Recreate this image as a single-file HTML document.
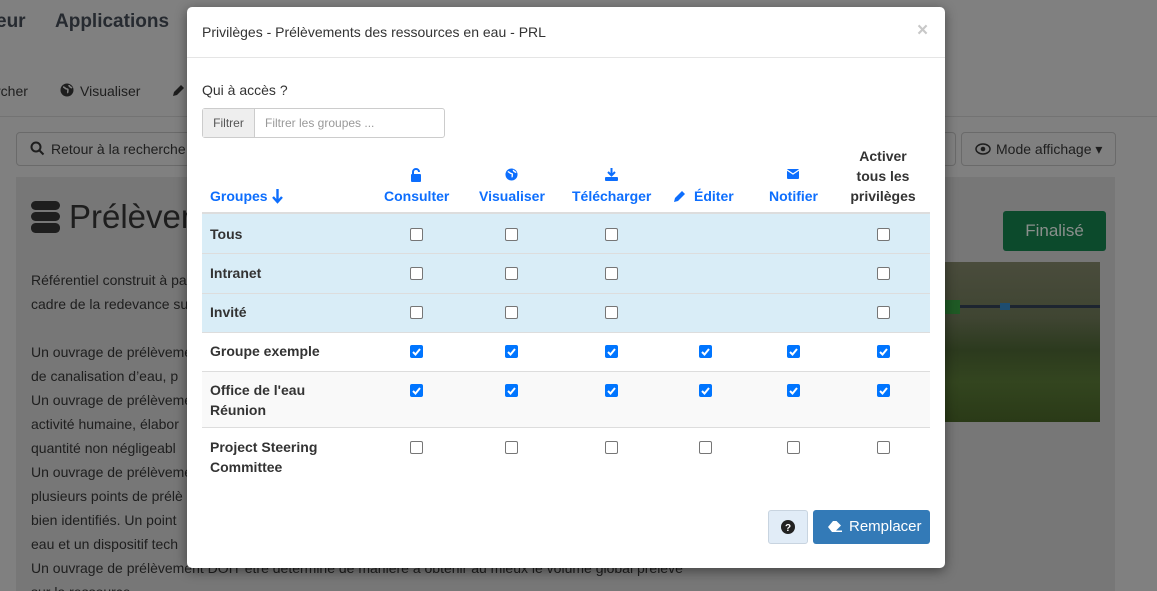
<!DOCTYPE html>
<html><head><meta charset="utf-8"><style>
*{box-sizing:border-box;margin:0;padding:0}
html,body{width:1157px;height:591px;overflow:hidden}
body{background:#808080;font-family:"Liberation Sans",Arial,sans-serif;position:relative;color:#222}
.a{position:absolute;white-space:nowrap}
.bg{color:#1e1e1e}
.modal{position:absolute;left:187px;top:7px;width:758px;height:561px;background:#fff;border-radius:5px;box-shadow:0 3px 12px rgba(0,0,0,.45)}
.cb{position:absolute;width:13px;height:13px;border:1px solid #767676;border-radius:2px;background:#fff}
.ck{position:absolute;width:13px;height:13px;border-radius:2px;background:#0075ff}
.ck svg{position:absolute;left:1px;top:1px}
.hd{position:absolute;color:#0d6efd;font-weight:bold;font-size:14px;text-align:center}
.g{position:absolute;left:23px;font-weight:bold;font-size:14px;color:#333;line-height:20px}
</style></head><body>
<div class="a bg" style="left:-4px;top:11px;font-size:19px;font-weight:bold;color:#262a30">eur</div>
<div class="a bg" style="left:55px;top:11px;font-size:19px;font-weight:bold;color:#262a30">Applications</div>
<div class="a bg" style="left:-4px;top:83px;font-size:14px">rcher</div>
<svg class="a" style="left:60px;top:83px" width="14" height="14" viewBox="0 0 14 14"><circle cx="7" cy="7" r="6.5" fill="#1e1e1e"/><path d="M3 4c2 0 2 2 4 2s0 3 1 4M9 2c0 2 2 2 3 3" stroke="#808080" stroke-width="1.6" fill="none"/></svg>
<div class="a bg" style="left:80px;top:83px;font-size:14px">Visualiser</div>
<svg class="a" style="left:172px;top:83px" width="14" height="14" viewBox="0 0 14 14"><path d="M1 13l1-4 7-7 3 3-7 7z" fill="#1e1e1e"/></svg>
<div class="a" style="left:0;top:116px;width:1157px;height:1px;background:#737373"></div>
<div class="a" style="left:16px;top:132px;width:180px;height:34px;border:1px solid #6a6a6a;border-radius:4px"></div>
<svg class="a" style="left:30px;top:141px" width="15" height="15" viewBox="0 0 15 15"><circle cx="6" cy="6" r="4.5" stroke="#1e1e1e" stroke-width="2" fill="none"/><path d="M9.5 9.5l4 4" stroke="#1e1e1e" stroke-width="2"/></svg>
<div class="a bg" style="left:51px;top:141px;font-size:14px">Retour à la recherche</div>
<div class="a" style="left:945px;top:132px;width:11px;height:34px;border:1px solid #6a6a6a;border-left:none;border-radius:0 4px 4px 0"></div>
<div class="a" style="left:961px;top:132px;width:155px;height:34px;border:1px solid #6a6a6a;border-radius:4px"></div>
<svg class="a" style="left:975px;top:142px" width="16" height="14" viewBox="0 0 16 14"><ellipse cx="8" cy="7" rx="7" ry="5" stroke="#1e1e1e" stroke-width="1.5" fill="none"/><circle cx="8" cy="7" r="2.3" fill="#1e1e1e"/></svg>
<div class="a bg" style="left:996px;top:141px;font-size:14px">Mode affichage ▾</div>
<div class="a" style="left:16px;top:177px;width:1099px;height:414px;background:#777"></div>
<svg class="a" style="left:31px;top:201px" width="29" height="32" viewBox="0 0 29 32"><rect x="0" y="0" width="29" height="9" rx="4.5" fill="#1e1e1e"/><rect x="0" y="11" width="29" height="9" rx="4.5" fill="#1e1e1e"/><rect x="0" y="22" width="29" height="10" rx="4.5" fill="#1e1e1e"/></svg>
<div class="a bg" style="left:69px;top:198px;font-size:33px">Prélèvements</div>
<div class="a bg" style="left:31px;top:268px;font-size:14px;line-height:24px">Référentiel construit à partir<br>cadre de la redevance sur</div>
<div class="a bg" style="left:31px;top:340px;font-size:14px;line-height:24px">Un ouvrage de prélèvement<br>de canalisation d’eau, p<br>Un ouvrage de prélèvement<br>activité humaine, élabor<br>quantité non négligeabl<br>Un ouvrage de prélèvement<br>plusieurs points de prélè<br>bien identifiés. Un point<br>eau et un dispositif tech<br>Un ouvrage de prélèvement DOIT être déterminé de manière à obtenir au mieux le volume global prélevé<br>sur la ressource</div>
<div class="a" style="left:1003px;top:211px;width:103px;height:40px;background:#0c4a2c;border-radius:3px;color:#8a8f8c;font-size:17px;text-align:center;line-height:40px">Finalisé</div>
<div class="a" style="left:940px;top:262px;width:160px;height:160px;background:linear-gradient(180deg,#4a4c3c 0%,#3f4532 35%,#2c3a1e 55%,#33451f 75%,#2a3a17 100%)"></div>
<div class="a" style="left:940px;top:305px;width:160px;height:3px;background:#1d2530"></div>
<div class="a" style="left:1000px;top:303px;width:10px;height:7px;background:#1d4d70"></div>
<div class="a" style="left:940px;top:300px;width:20px;height:14px;background:#1f5a25"></div>

<div class="modal">
 <div class="a" style="left:15px;top:17px;font-size:14px;color:#333">Privilèges - Prélèvements des ressources en eau - PRL</div>
 <div class="a" style="left:730px;top:13px;font-size:19px;color:#c8c8c8;font-weight:bold">×</div>
 <div class="a" style="left:0;top:50px;width:758px;height:1px;background:#e5e5e5"></div>
 <div class="a" style="left:15px;top:75px;font-size:14px;color:#333">Qui à accès ?</div>
 <div class="a" style="left:15px;top:101px;width:243px;height:30px;border:1px solid #ccc;border-radius:3px"></div>
 <div class="a" style="left:16px;top:102px;width:52px;height:28px;background:#eee;border-right:1px solid #ccc;font-size:12px;color:#555;text-align:center;line-height:28px">Filtrer</div>
 <div class="a" style="left:78px;top:109px;font-size:12px;color:#999">Filtrer les groupes ...</div>

 <div class="hd" style="left:23px;top:181px">Groupes</div>
 <svg class="a" style="left:85px;top:182px" width="11" height="15" viewBox="0 0 11 15"><path d="M5.5 0v12M1 8l4.5 5L10 8" stroke="#0d6efd" stroke-width="2.4" fill="none"/></svg>
 <svg class="a" style="left:223px;top:161px" width="12" height="14" viewBox="0 0 12 14"><path d="M3 6V4a3 3 0 016 0" stroke="#0d6efd" stroke-width="2" fill="none"/><rect x="1" y="6" width="10" height="8" rx="1" fill="#0d6efd"/></svg>
 <div class="hd" style="left:197px;top:181px">Consulter</div>
 <svg class="a" style="left:318px;top:161px" width="13" height="13" viewBox="0 0 14 14"><circle cx="7" cy="7" r="6.5" fill="#0d6efd"/><path d="M3 4c2 0 2 2 4 2s0 3 1 4M9 2c0 2 2 2 3 3" stroke="#fff" stroke-width="1.5" fill="none"/></svg>
 <div class="hd" style="left:292px;top:181px">Visualiser</div>
 <svg class="a" style="left:418px;top:160px" width="13" height="14" viewBox="0 0 13 14"><path d="M6.5 1v7M3 5l3.5 3.5L10 5" stroke="#0d6efd" stroke-width="2" fill="none"/><rect x="0" y="10" width="13" height="4" rx="1" fill="#0d6efd"/></svg>
 <div class="hd" style="left:385px;top:181px">Télécharger</div>
 <svg class="a" style="left:486px;top:182px" width="14" height="14" viewBox="0 0 14 14"><path d="M1 13l1-4 7-7 3 3-7 7z" fill="#0d6efd"/></svg>
 <div class="hd" style="left:507px;top:181px">Éditer</div>
 <svg class="a" style="left:600px;top:162px" width="12" height="10" viewBox="0 0 12 10"><rect width="12" height="10" rx="1" fill="#0d6efd"/><path d="M0 1l6 4 6-4" stroke="#fff" stroke-width="1.3" fill="none"/></svg>
 <div class="hd" style="left:582px;top:181px">Notifier</div>
 <div class="a" style="left:661px;top:139px;width:70px;text-align:center;font-weight:bold;font-size:14px;color:#333;line-height:20px;white-space:normal">Activer tous les privilèges</div>
 <div class="a" style="left:15px;top:205px;width:728px;height:2px;background:#ddd"></div>

 <div class="a" style="left:15px;top:207px;width:728px;height:118px;background:#d9edf7"></div>
 <div class="a" style="left:15px;top:246px;width:728px;height:1px;background:#ddd"></div>
 <div class="a" style="left:15px;top:286px;width:728px;height:1px;background:#ddd"></div>
 <div class="a" style="left:15px;top:325px;width:728px;height:1px;background:#ddd"></div>
 <div class="a" style="left:15px;top:364px;width:728px;height:57px;background:#f9f9f9;border-top:1px solid #ddd;border-bottom:1px solid #ddd"></div>

 <div class="g" style="top:217px">Tous</div>
 <div class="g" style="top:256px">Intranet</div>
 <div class="g" style="top:295px">Invité</div>
 <div class="g" style="top:334px">Groupe exemple</div>
 <div class="g" style="top:373px">Office de l'eau<br>Réunion</div>
 <div class="g" style="top:430px">Project Steering<br>Committee</div>

 <div class="cb" style="left:223px;top:221px"></div><div class="cb" style="left:318px;top:221px"></div><div class="cb" style="left:418px;top:221px"></div><div class="cb" style="left:690px;top:221px"></div>
 <div class="cb" style="left:223px;top:260px"></div><div class="cb" style="left:318px;top:260px"></div><div class="cb" style="left:418px;top:260px"></div><div class="cb" style="left:690px;top:260px"></div>
 <div class="cb" style="left:223px;top:299px"></div><div class="cb" style="left:318px;top:299px"></div><div class="cb" style="left:418px;top:299px"></div><div class="cb" style="left:690px;top:299px"></div>

 <div class="ck" style="left:223px;top:338px"><svg width="11" height="11"><path d="M2 6l2.5 2.5L9 3" stroke="#fff" stroke-width="2" fill="none"/></svg></div>
 <div class="ck" style="left:318px;top:338px"><svg width="11" height="11"><path d="M2 6l2.5 2.5L9 3" stroke="#fff" stroke-width="2" fill="none"/></svg></div>
 <div class="ck" style="left:418px;top:338px"><svg width="11" height="11"><path d="M2 6l2.5 2.5L9 3" stroke="#fff" stroke-width="2" fill="none"/></svg></div>
 <div class="ck" style="left:512px;top:338px"><svg width="11" height="11"><path d="M2 6l2.5 2.5L9 3" stroke="#fff" stroke-width="2" fill="none"/></svg></div>
 <div class="ck" style="left:600px;top:338px"><svg width="11" height="11"><path d="M2 6l2.5 2.5L9 3" stroke="#fff" stroke-width="2" fill="none"/></svg></div>
 <div class="ck" style="left:690px;top:338px"><svg width="11" height="11"><path d="M2 6l2.5 2.5L9 3" stroke="#fff" stroke-width="2" fill="none"/></svg></div>

 <div class="ck" style="left:223px;top:377px"><svg width="11" height="11"><path d="M2 6l2.5 2.5L9 3" stroke="#fff" stroke-width="2" fill="none"/></svg></div>
 <div class="ck" style="left:318px;top:377px"><svg width="11" height="11"><path d="M2 6l2.5 2.5L9 3" stroke="#fff" stroke-width="2" fill="none"/></svg></div>
 <div class="ck" style="left:418px;top:377px"><svg width="11" height="11"><path d="M2 6l2.5 2.5L9 3" stroke="#fff" stroke-width="2" fill="none"/></svg></div>
 <div class="ck" style="left:512px;top:377px"><svg width="11" height="11"><path d="M2 6l2.5 2.5L9 3" stroke="#fff" stroke-width="2" fill="none"/></svg></div>
 <div class="ck" style="left:600px;top:377px"><svg width="11" height="11"><path d="M2 6l2.5 2.5L9 3" stroke="#fff" stroke-width="2" fill="none"/></svg></div>
 <div class="ck" style="left:690px;top:377px"><svg width="11" height="11"><path d="M2 6l2.5 2.5L9 3" stroke="#fff" stroke-width="2" fill="none"/></svg></div>

 <div class="cb" style="left:223px;top:434px"></div><div class="cb" style="left:318px;top:434px"></div><div class="cb" style="left:418px;top:434px"></div><div class="cb" style="left:512px;top:434px"></div><div class="cb" style="left:600px;top:434px"></div><div class="cb" style="left:690px;top:434px"></div>

 <div class="a" style="left:581px;top:503px;width:40px;height:34px;background:#e1ecf7;border:1px solid #c8d4e0;border-radius:3px"></div>
 <svg class="a" style="left:594px;top:513px" width="14" height="14" viewBox="0 0 14 14"><circle cx="7" cy="7" r="7" fill="#222"/><text x="7" y="11" font-size="10" font-weight="bold" fill="#fff" text-anchor="middle" font-family="Liberation Sans">?</text></svg>
 <div class="a" style="left:626px;top:503px;width:117px;height:34px;background:#337ab7;border-radius:3px"></div>
 <svg class="a" style="left:640px;top:513px" width="16" height="13" viewBox="0 0 16 13"><path d="M6 1L1 7l4 5h10v-1.5H9l5-5-4.5-4.5z" fill="#fff"/></svg>
 <div class="a" style="left:662px;top:511px;font-size:15px;color:#fff">Remplacer</div>
</div>
</body></html>
